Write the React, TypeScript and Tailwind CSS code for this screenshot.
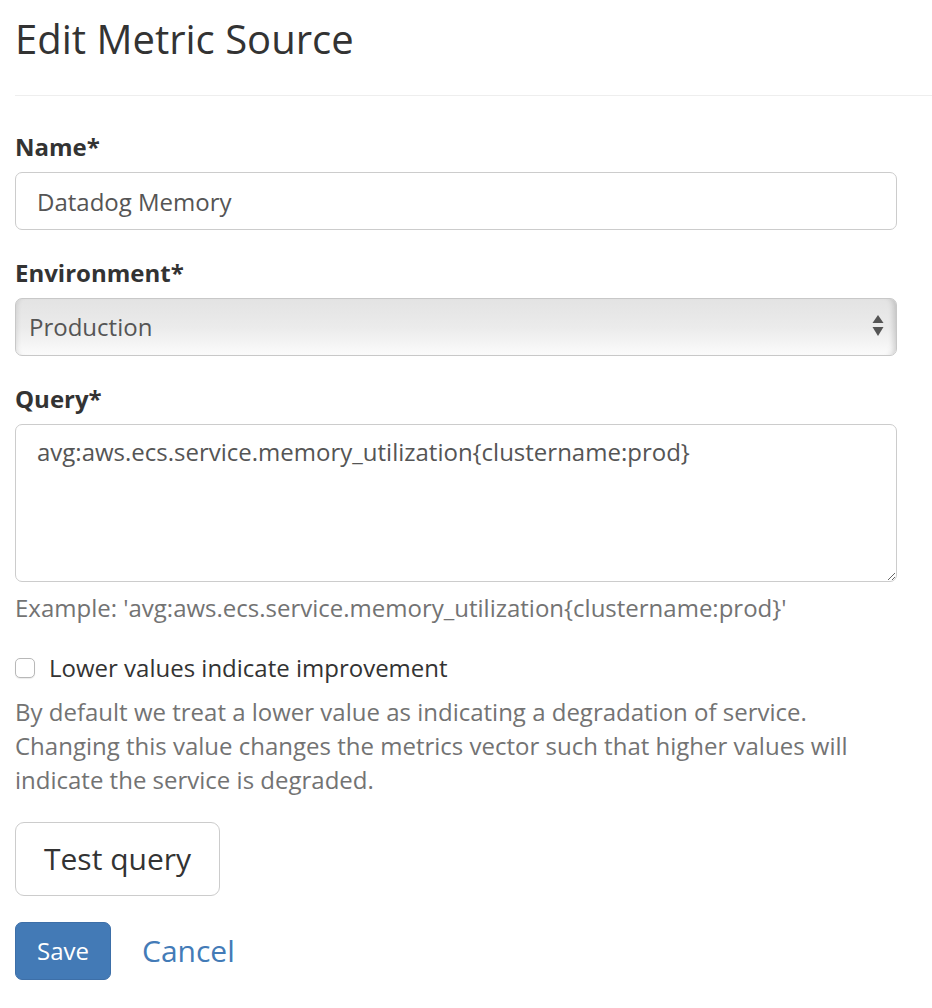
import React from "react";

export default function App() {
  return (
    <div className="min-h-screen bg-white font-['Open_Sans',_'Liberation_Sans',_sans-serif] text-[24px] leading-[34px] text-[#333]">
      <div className="pl-[15px]">
        <div className="border-b border-[#eee] pt-[16px] pb-[34px]">
          <h3 className="text-[40px] leading-[45px] font-normal text-[#333]">Edit Metric Source</h3>
        </div>
      </div>
      <form className="ml-[15px] w-[882px] pt-[34px]" onSubmit={(e) => e.preventDefault()}>
        <div className="mb-[26px]">
          <label className="mb-[8px] block font-bold">Name*</label>
          <input
            type="text"
            defaultValue="Datadog Memory"
            className="block h-[58px] w-full rounded-[7px] border border-[#ccc] bg-white px-[21px] text-[24px] text-[#555] outline-none"
          />
        </div>
        <div className="mb-[26px]">
          <label className="mb-[8px] block font-bold">Environment*</label>
          <div className="relative h-[58px] w-full rounded-[7px] border border-[#c8c8c8] bg-[linear-gradient(to_bottom,#e3e3e3_0%,#ebebeb_50%,#fbfbfb_100%)] shadow-[inset_-7px_0_6px_-5px_rgba(0,0,0,0.18),inset_5px_0_5px_-4px_rgba(0,0,0,0.1)]">
            <div className="flex h-full items-center pl-[13px] text-[#555]">Production</div>
            <svg className="absolute right-[12px] top-[16px]" width="12" height="22" viewBox="0 0 12 22">
              <polygon points="6,0 11.5,8 0.5,8" fill="#555" />
              <polygon points="0.5,12 11.5,12 6,21" fill="#555" />
            </svg>
          </div>
        </div>
        <div className="mb-[26px]">
          <label className="mb-[8px] block font-bold">Query*</label>
          <textarea
            rows={4}
            defaultValue="avg:aws.ecs.service.memory_utilization{clustername:prod}"
            className="block h-[158px] w-full resize rounded-[7px] border border-[#ccc] bg-white px-[21px] py-[10px] text-[24px] leading-[34px] text-[#555] outline-none"
          />
          <p className="mt-[9px] text-[#737373]">Example: 'avg:aws.ecs.service.memory_utilization&#123;clustername:prod&#125;'</p>
        </div>
        <div className="flex h-[34px] items-center">
          <input
            type="checkbox"
            className="m-0 h-[20px] w-[20px] appearance-none rounded-[5px] border border-[#b8b8b8] bg-white shadow-[0_1px_1px_rgba(0,0,0,0.08)]"
          />
          <span className="ml-[14px]">Lower values indicate improvement</span>
        </div>
        <p className="mt-[10px] text-[#737373]">
          <span className="block whitespace-nowrap">By default we treat a lower value as indicating a degradation of service.</span>
          <span className="block whitespace-nowrap">Changing this value changes the metrics vector such that higher values will</span>
          <span className="block whitespace-nowrap">indicate the service is degraded.</span>
        </p>
        <div className="mt-[25px]">
          <button
            type="button"
            className="flex h-[74px] items-center rounded-[9px] border border-[#ccc] bg-white px-[28px] text-[30px] leading-[40px] text-[#333]"
          >
            Test query
          </button>
        </div>
        <div className="mt-[26px] flex items-center">
          <button
            type="submit"
            className="flex h-[58px] w-[96px] items-center justify-center rounded-[7px] border border-[#3d6fa8] bg-[#437ab6] text-[24px] text-white"
          >
            Save
          </button>
          <a href="#" className="ml-[31px] text-[30px] leading-[40px] text-[#437bb7] no-underline">
            Cancel
          </a>
        </div>
      </form>
    </div>
  );
}
